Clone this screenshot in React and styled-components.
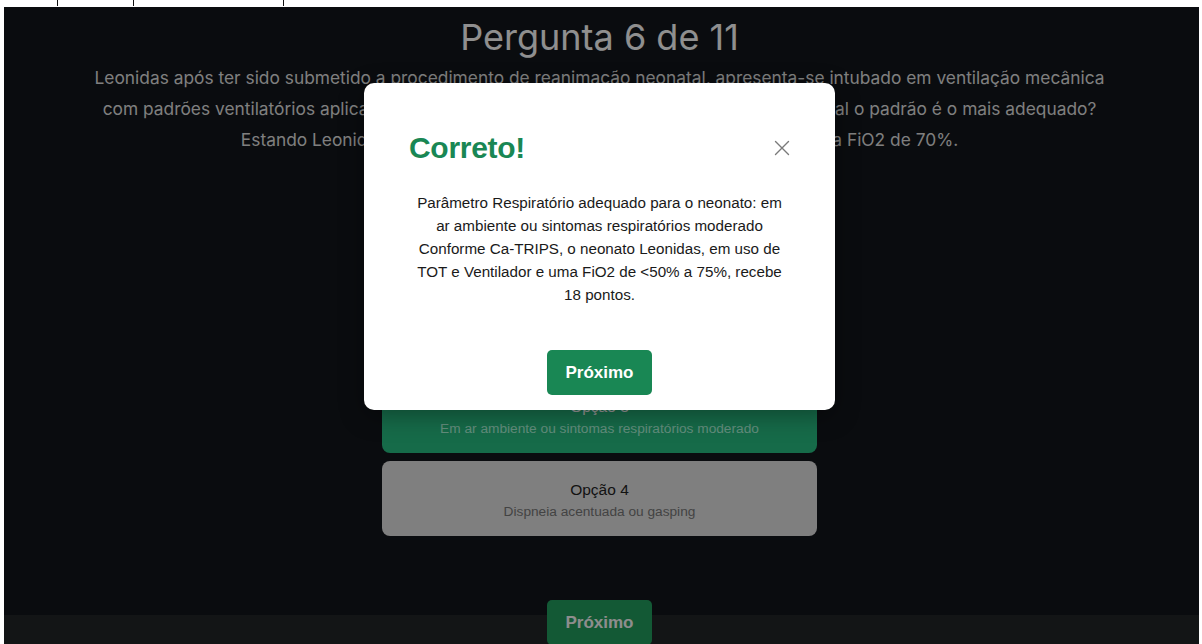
import React from "react";
import styled, { createGlobalStyle } from "styled-components";

const GlobalStyle = createGlobalStyle`
	html, body {
		margin: 0;
		padding: 0;
		background: #ffffff;
	}
	* {
		box-sizing: border-box;
	}
`;

const Shell = styled.div`
	width: 1202px;
	height: 644px;
	display: flex;
	flex-direction: column;
	overflow: hidden;
`;

const TopStrip = styled.svg`
	display: block;
	flex: 0 0 7px;
`;

const Page = styled.div`
	position: relative;
	flex: 1;
	margin: 0 3px 0 4px;
	display: flex;
	flex-direction: column;
	overflow: hidden;
	font-family: Inter, "Liberation Sans", sans-serif;
`;

const Main = styled.main`
	flex: 0 0 608px;
	background: #121419;
	display: flex;
	flex-direction: column;
	align-items: center;
	padding: 9px 4px 0 0;
`;

const Title = styled.h1`
	margin: 0;
	font-size: 36px;
	font-weight: 400;
	line-height: 42px;
	color: #eeeeee;
`;

const Question = styled.p`
	margin: 4px 0 0;
	font-size: 17.35px;
	font-weight: 400;
	line-height: 31px;
	color: #d4d4d4;
	text-align: center;
	white-space: nowrap;
`;

const Options = styled.div`
	margin-top: 57px;
	width: 435px;
	display: flex;
	flex-direction: column;
	gap: 8px;
`;

const Option = styled.button`
	height: 75px;
	border: none;
	border-radius: 8px;
	display: flex;
	flex-direction: column;
	align-items: center;
	justify-content: center;
	gap: 5px;
	padding: 2px 0 0;
	font-family: "Liberation Sans", Arial, sans-serif;
	background: ${(p) => (p.$correct ? "#25b27b" : "#d4d4d4")};
	color: ${(p) => (p.$correct ? "#ffffff" : "#1e1e1e")};
`;

const OptionLabel = styled.span`
	font-size: 15.5px;
`;

const OptionText = styled.span`
	font-size: 13.7px;
	color: ${(p) => (p.$correct ? "#a6ecd0" : "#707070")};
`;

const Footer = styled.footer`
	flex: 1;
	background: #212326;
	display: flex;
	justify-content: center;
	padding-right: 4px;
`;

const NextButton = styled.button`
	width: 105px;
	height: 45px;
	border: none;
	border-radius: 5px;
	background: ${(p) => (p.$inModal ? "#198754" : "#219459")};
	color: ${(p) => (p.$inModal ? "#ffffff" : "#ececec")};
	font-family: "Liberation Sans", Arial, sans-serif;
	font-size: 17px;
	font-weight: 700;
	margin-top: ${(p) => (p.$inModal ? "0" : "-15px")};
	flex-shrink: 0;
`;

const Backdrop = styled.div`
	position: absolute;
	inset: 0;
	background: rgba(0, 0, 0, 0.4);
	display: flex;
	justify-content: center;
	align-items: flex-start;
	padding: 76px 4px 0 0;
`;

const Modal = styled.div`
	width: 471px;
	background: #ffffff;
	border-radius: 10px;
	box-shadow: 0 6px 24px rgba(0, 0, 0, 0.35);
	display: flex;
	flex-direction: column;
	padding: 47px 45px 15px;
	font-family: "Liberation Sans", Arial, sans-serif;
`;

const ModalHeader = styled.div`
	display: flex;
	align-items: center;
	justify-content: space-between;
	height: 36px;
`;

const ModalTitle = styled.h2`
	margin: 0;
	font-size: 30px;
	font-weight: 700;
	color: #198754;
	letter-spacing: -0.3px;
`;

const CloseButton = styled.button`
	width: 20px;
	height: 20px;
	padding: 0;
	border: none;
	background: transparent;
	display: flex;
	align-items: center;
	justify-content: center;
	margin-right: -2px;
`;

const ModalBody = styled.p`
	margin: 25px auto 0;
	width: 374px;
	font-size: 15.2px;
	line-height: 23px;
	color: #1a1a1a;
	text-align: center;
`;

const ModalFooter = styled.div`
	display: flex;
	justify-content: center;
	margin-top: 44px;
`;

const options = [
	{ label: "Opção 1", text: "Sem esforço respiratório em ar ambiente" },
	{ label: "Opção 2", text: "Esforço respiratório leve em ar ambiente" },
	{ label: "Opção 3", text: "Em ar ambiente ou sintomas respiratórios moderado", correct: true },
	{ label: "Opção 4", text: "Dispneia acentuada ou gasping" }
];

const ticks = [57, 133, 283];

export default function App() {
	return (
		<>
			<GlobalStyle />
			<Shell>
				<TopStrip width="1202" height="7">
					{ticks.map((x) => (
						<line key={x} x1={x + 0.5} y1="0" x2={x + 0.5} y2="6" stroke="#111" strokeWidth="1" />
					))}
				</TopStrip>
				<Page>
					<Main>
						<Title>Pergunta 6 de 11</Title>
						<Question>
							Leonidas após ter sido submetido a procedimento de reanimação neonatal, apresenta-se intubado em ventilação mecânica
							<br />
							com padrões ventilatórios aplicados conforme o Ca-TRIPS. Dentre as opções a seguir, qual o padrão é o mais adequado?
							<br />
							Estando Leonidas em uso de TOT e Ventilador mecânico, recebendo uma FiO2 de 70%.
						</Question>
						<Options>
							{options.map((o) => (
								<Option key={o.label} $correct={o.correct}>
									<OptionLabel>{o.label}</OptionLabel>
									<OptionText $correct={o.correct}>{o.text}</OptionText>
								</Option>
							))}
						</Options>
					</Main>
					<Footer>
						<NextButton>Próximo</NextButton>
					</Footer>
					<Backdrop>
						<Modal>
							<ModalHeader>
								<ModalTitle>Correto!</ModalTitle>
								<CloseButton aria-label="Fechar">
									<svg width="16" height="16" viewBox="0 0 16 16">
										<path d="M1.5 1.5 L14.5 14.5 M14.5 1.5 L1.5 14.5" stroke="#7a7a7a" strokeWidth="1.4" strokeLinecap="round" />
									</svg>
								</CloseButton>
							</ModalHeader>
							<ModalBody>
								Parâmetro Respiratório adequado para o neonato: em ar ambiente ou sintomas respiratórios moderado
								<br />
								Conforme Ca-TRIPS, o neonato Leonidas, em uso de TOT e Ventilador e uma FiO2 de &lt;50% a 75%, recebe 18 pontos.
							</ModalBody>
							<ModalFooter>
								<NextButton $inModal>Próximo</NextButton>
							</ModalFooter>
						</Modal>
					</Backdrop>
				</Page>
			</Shell>
		</>
	);
}
